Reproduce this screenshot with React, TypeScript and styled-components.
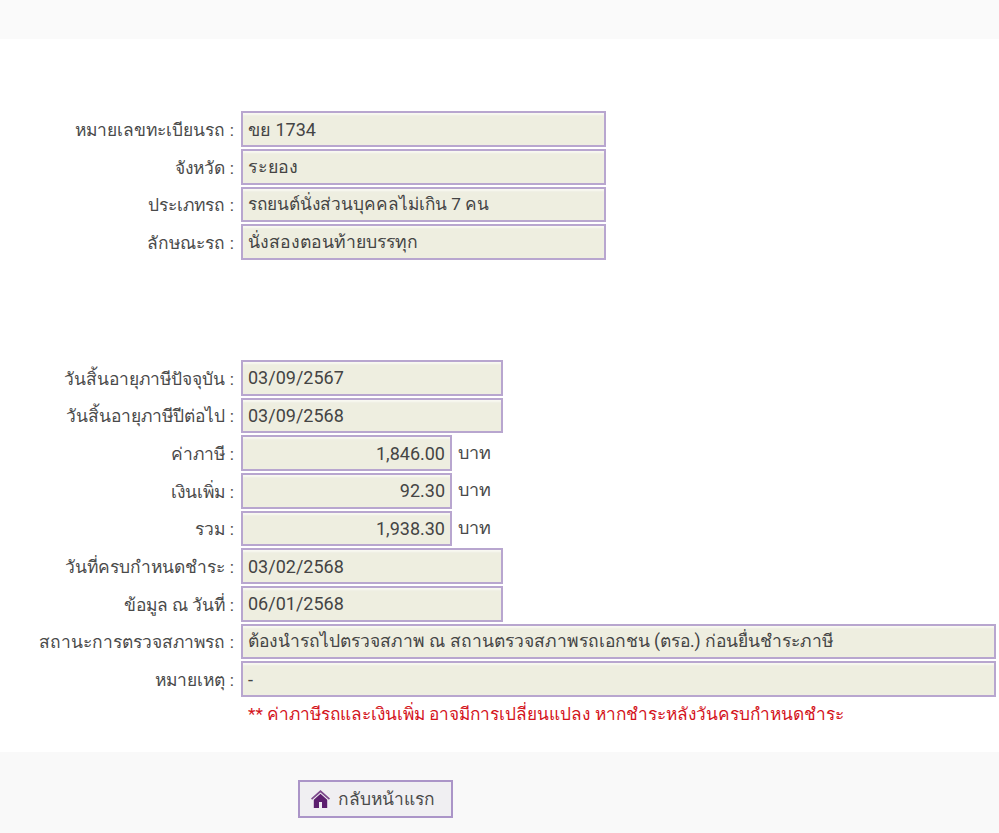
import React from 'react';
import styled, {createGlobalStyle} from "styled-components";

const GlobalStyle = createGlobalStyle`
  html, body {
    margin: 0;
    padding: 0;
    background: #fff;
    font-family: Roboto, "Noto Sans", sans-serif;
    font-size: 18px;
    color: #333;
  }
`

type RowData = {
    label: string;
    value: string;
    size?: "short" | "money" | "full";
    fontSize?: number;
}

const carRows: RowData[] = [
    {label: "หมายเลขทะเบียนรถ :", value: "ขย 1734"},
    {label: "จังหวัด :", value: "ระยอง", fontSize: 17.8},
    {label: "ประเภทรถ :", value: "รถยนต์นั่งส่วนบุคคลไม่เกิน 7 คน", fontSize: 17.25},
    {label: "ลักษณะรถ :", value: "นั่งสองตอนท้ายบรรทุก", fontSize: 17.6},
]

const taxRows: RowData[] = [
    {label: "วันสิ้นอายุภาษีปัจจุบัน :", value: "03/09/2567", size: "short"},
    {label: "วันสิ้นอายุภาษีปีต่อไป :", value: "03/09/2568", size: "short"},
    {label: "ค่าภาษี :", value: "1,846.00", size: "money"},
    {label: "เงินเพิ่ม :", value: "92.30", size: "money"},
    {label: "รวม :", value: "1,938.30", size: "money"},
    {label: "วันที่ครบกำหนดชำระ :", value: "03/02/2568", size: "short"},
    {label: "ข้อมูล ณ วันที่ :", value: "06/01/2568", size: "short"},
    {label: "สถานะการตรวจสภาพรถ :", value: "ต้องนำรถไปตรวจสภาพ ณ สถานตรวจสภาพรถเอกชน (ตรอ.) ก่อนยื่นชำระภาษี", size: "full", fontSize: 17.48},
    {label: "หมายเหตุ :", value: "-", size: "full"},
]

const HomeIcon = () => (
    <svg width="19" height="18" viewBox="0 0 19 18">
        <path d="M9.5 0 L0 8.6 L1.1 9.8 L9.5 2.4 L17.9 9.8 L19 8.6 Z" fill="#7d4a8c"/>
        <path d="M9.5 3.8 L2.8 9.8 L2.8 18 L16.2 18 L16.2 9.8 Z M8 12 L11 12 L11 18 L8 18 Z" fill="#5c1f6e" fillRule="evenodd"/>
    </svg>
)

const Row = ({label, value, size, fontSize}: RowData) => (
    <FormRow>
        <Label>{label}</Label>
        <Field $size={size} $fontSize={fontSize}>{value}</Field>
        {size === "money" && <Unit>บาท</Unit>}
    </FormRow>
)

export default function App() {
    return (
        <Page>
            <GlobalStyle/>
            <TopBar/>
            <Section>
                {carRows.map(row => <Row key={row.label} {...row}/>)}
            </Section>
            <TaxSection>
                {taxRows.map(row => <Row key={row.label} {...row}/>)}
                <Note>** ค่าภาษีรถและเงินเพิ่ม อาจมีการเปลี่ยนแปลง หากชำระหลังวันครบกำหนดชำระ</Note>
            </TaxSection>
            <Footer>
                <HomeButton>
                    <HomeIcon/>
                    กลับหน้าแรก
                </HomeButton>
            </Footer>
        </Page>
    );
}

const Page = styled.div`
  width: 999px;
  height: 833px;
  overflow: hidden;
  display: flex;
  flex-direction: column;
`

const TopBar = styled.div`
  height: 39px;
  background: #fafafa;
`

const Section = styled.div`
  padding-top: 72.33px;
  display: flex;
  flex-direction: column;
  gap: 2px;
`

const TaxSection = styled(Section)`
  padding-top: 100px;
`

const FormRow = styled.div`
  display: flex;
  align-items: center;
  height: 35.67px;
`

const Label = styled.div`
  width: 234px;
  margin-right: 7px;
  padding-top: 2px;
  flex-shrink: 0;
  text-align: right;
  font-size: 17.42px;
  color: #4a4a4a;
`

const fieldWidths = {short: "262px", money: "211px", full: "755px"}

const Field = styled.div<{ $size?: "short" | "money" | "full"; $fontSize?: number }>`
  box-sizing: border-box;
  width: ${p => p.$size ? fieldWidths[p.$size] : "365px"};
  height: 100%;
  padding: 0 5px;
  display: flex;
  align-items: center;
  justify-content: ${p => p.$size === "money" ? "flex-end" : "flex-start"};
  border: 2px solid #b8a6cf;
  box-shadow: inset 0 3px 2px -1px #f8f8f2;
  background: #eeeee0;
  color: #444;
  font-size: ${p => p.$fontSize ?? 18}px;
`

const Unit = styled.span`
  margin: 0 0 2px 6px;
  color: #4a4a4a;
`

const Note = styled.div`
  margin-left: 248px;
  padding-top: 2px;
  color: #d4141c;
  font-size: 17.26px;
  line-height: 26px;
`

const Footer = styled.div`
  margin-top: 25px;
  flex: 1;
  background: #f9f9f9;
  padding: 28px 0 0 298px;
`

const HomeButton = styled.div`
  box-sizing: border-box;
  width: 155px;
  height: 38px;
  display: flex;
  align-items: center;
  gap: 8px;
  padding-left: 11px;
  border: 2px solid #ab95c8;
  background: #f0eff2;
  font-size: 17.4px;
  color: #4a4a4a;
`
